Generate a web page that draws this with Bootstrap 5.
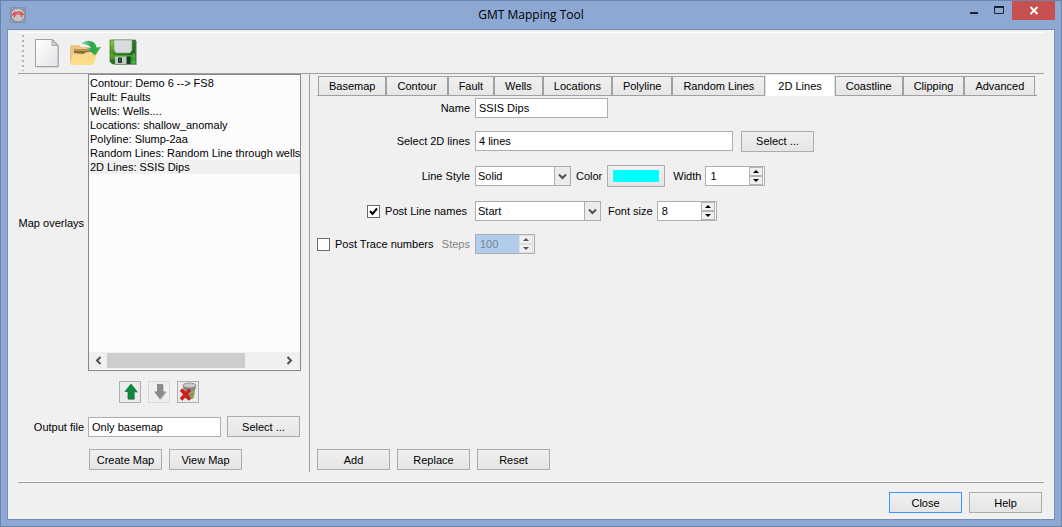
<!DOCTYPE html>
<html lang="en">
<head>
<meta charset="utf-8">
<meta name="viewport" content="width=device-width, initial-scale=1">
<title>GMT Mapping Tool</title>
<link rel="stylesheet" href="https://cdn.jsdelivr.net/npm/bootstrap@5.3.0/dist/css/bootstrap.min.css">
<style>
  :root { --face: #f0f0f0; --line: #a0a0a0; --edge: #abadb3; --chrome: #8ca8d3; }
  body { font-family: "Liberation Sans", Arial, sans-serif; font-size: 11px; line-height: 14px; color: #000; background: var(--chrome); }
  button, input, select { font: inherit; color: inherit; }
  .window { border: 1px solid #6d84a8; padding: 0 6px 6px; }
  .titlebar { height: 28px; }
  .titlebar h1 { font: 12px/28px "Open Sans", sans-serif; }
  .titlebar .app-icon { width: 16px; margin-left: 3px; margin-top: 6px; }
  .win-controls { height: 19px; }
  .win-controls button { border: 0; padding: 0; background: none; width: 25px; height: 19px; display: flex; }
  .win-controls .win-close { background: #c75050; width: 43px; }
  .client { background: var(--face); border: 1px solid #748cb0; padding: 2px 10px 6px; }
  .tool-bar { border-top: 1px solid #fff; border-bottom: 1px solid var(--line); height: 42px; padding: 3px 4px; gap: 6px; }
  .tool-bar button { border: 0; background: none; padding: 0; width: 32px; height: 32px; }
  .tool-bar svg { display: block; }
  .grip { width: 2px; height: 36px; margin-right: 2px; background: repeating-linear-gradient(#b4b4b4 0 2px, transparent 2px 5px); }

  .overlays { width: 292px; padding-right: 8px; border-right: 1px solid var(--line); margin-bottom: 10px; }
  .side-label { width: 66px; flex: none; text-align: right; white-space: nowrap; }
  .overlay-list { border: 1px solid #828790; background: #fcfcfc; padding: 1px 0; min-width: 0; }
  .overlay-list .list-group-item { border: 0; border-radius: 0; background: none; color: #000; margin: 0; padding: 0 0 0 1px; line-height: 14px; white-space: nowrap; }
  .overlay-list .list-group-item.active { background: var(--face); margin: 0; }
  .h-scroll { background: var(--face); height: 17px; }
  .h-scroll button { border: 0; background: none; padding: 0; width: 18px; height: 17px; display: flex; }
  .h-scroll .thumb { width: 138px; height: 15px; background: #cdcdcd; }
  .icon-btn { width: 22px; height: 22px; padding: 0; border: 1px solid #adadad; background: #ebebeb; display: flex; }
  .icon-btn:disabled { border-color: #d9d9d9; background: #efefef; }
  .move-row { margin: 10px 0 13px 101px; }
  .out-row { padding-right: 1px; }
  .out-select { margin-left: 6px; flex: none; }
  .map-row { margin: 12px 0 2px 71px; }

  .btn-classic { --bs-btn-font-size: 11px; --bs-btn-line-height: 14px; --bs-btn-padding-x: 0; --bs-btn-padding-y: 0; --bs-btn-border-radius: 0; --bs-btn-color: #000; --bs-btn-border-color: #acacac; width: 73px; height: 21px; background: linear-gradient(#f0f0f0, #e5e5e5); }
  .btn-classic.is-default { border-color: #3399ff; }
  .btn-set { gap: 7px; }
  .field { border: 1px solid var(--edge); background: #fff; height: 20px; padding: 0 3px; border-radius: 0; min-width: 0; }
  .name-field { width: 133px; }
  .lines-field { width: 258px; }
  .combo select { appearance: none; width: 100%; padding: 0 20px 0 2px; display: block; }
  .combo svg { position: absolute; right: 0; top: 0; pointer-events: none; }
  .style-combo { width: 96px; }
  .post-combo { width: 126px; }
  .swatch-btn { width: 58px; height: 22px; padding: 4px 5px; border: 1px solid #acacac; background: linear-gradient(#f0f0f0, #e5e5e5); }
  .swatch-btn span { display: block; height: 12px; background: #0ff; }
  .spin { width: 60px; padding: 0 1px 0 0; }
  .spin input { width: 43px; height: 18px; border: 0; padding: 0 4px; background: #fff; appearance: textfield; }
  .spin input::-webkit-inner-spin-button { display: none; }
  .spin input:disabled { background: #b0cdec; color: #7b8390; }
  .spin-arrows { width: 14px; margin: 0 0 0 auto; }
  .spin-arrows button { height: 9px; padding: 0; border: 1px solid #b4b4b4; background: #f0f0f0; display: flex; }
  .spin-arrows button:disabled { border-color: #dcdcdc; }
  .spin:has(:disabled) { background: var(--face); }

  .editor { padding: 0 7px 12px; min-width: 0; }
  .nav-classic { padding: 0 1px; border-bottom: 1px solid var(--line); height: 22px; align-items: flex-end; --bs-nav-tabs-border-width: 0; flex-wrap: nowrap; }
  .nav-classic .nav-link { border: 1px solid var(--line); border-bottom: 0; border-radius: 0; padding: 0 10px; height: 19px; line-height: 18px; font-size: 11px; color: #000; margin: 0; background: linear-gradient(#f0f0f0, #e6e6e6); white-space: nowrap; }
  .nav-classic .nav-link.active { background: #fff; color: #000; height: 22px; margin-bottom: -1px; padding: 0 12px; line-height: 20px; position: relative; }
  .form-line { height: 22px; margin-top: 13px; }
  .form-line.tight { margin-top: 11px; }
  .form-line.first { margin-top: 1px; }
  .caption-col { width: 153px; margin-right: 5px; white-space: nowrap; }
  .check-pad { padding-right: 3px; }
  .tick { appearance: none; width: 13px; height: 13px; margin: 0 5px 0 0; border: 1px solid #6a6a6a; background: #fff; }
  .tick:checked { background: #fff url("data:image/svg+xml,%3Csvg xmlns='http://www.w3.org/2000/svg' viewBox='0 0 11 11'%3E%3Cpath d='M2 5l2.5 3L9 2.5' fill='none' stroke='%23000' stroke-width='2'/%3E%3C/svg%3E"); }
  .dim { color: #838383; }
  .color-label { margin: 0 5px; }
  .width-label { margin: 0 4px 0 8px; }
  .size-label { margin: 0 4px 0 7px; }
  .footer-bar { border-top: 1px solid var(--line); box-shadow: 0 -1px #fff; padding: 9px 2px 0; gap: 7px; }
</style>
</head>
<body>
<div class="window d-flex flex-column min-vh-100">
  <header class="titlebar position-relative d-flex justify-content-between align-items-start">
    <svg class="app-icon" width="16" height="16" viewBox="0 0 16 16" aria-hidden="true">
      <rect x=".5" y=".5" width="15" height="15" fill="#8e9eb9" stroke="#7e92b5"/>
      <circle cx="8" cy="8" r="7" fill="#c6c3c3" stroke="#8a8789"/>
      <path d="M2 8.500q1.500-1 2.500-3l6-.5 3.500 3M4 7h9M5.500 7l-1.500 3M11 7l1 3" fill="none" stroke="#e33a40" stroke-width="1.200"/>
    </svg>
    <h1 class="position-absolute start-0 end-0 text-center m-0 pe-none">GMT Mapping Tool</h1>
    <div class="win-controls d-flex">
      <button type="button" aria-label="Minimize"><svg width="25" height="19"><path d="M8 12h8" stroke="#1c2430" stroke-width="2"/></svg></button>
      <button type="button" aria-label="Maximize"><svg width="25" height="19"><path d="M7.500 6v6.500h9V6" fill="none" stroke="#1c2430"/><path d="M7 6h10" stroke="#1c2430" stroke-width="2"/></svg></button>
      <button type="button" class="win-close" aria-label="Close window"><svg width="43" height="19"><path d="M18.500 6l7 7m0-7l-7 7" stroke="#fff" stroke-width="1.800"/></svg></button>
    </div>
  </header>

  <main class="client flex-grow-1 d-flex flex-column">
    <div class="tool-bar d-flex align-items-center" role="toolbar" aria-label="File">
      <span class="grip"></span>
      <button type="button" aria-label="New">
        <svg width="32" height="32" viewBox="0 0 32 32">
          <defs><linearGradient id="paper" x2="1" y2="1"><stop stop-color="#fff"/><stop offset="1" stop-color="#e3e4e8"/></linearGradient></defs>
          <path d="M5 3.500h17l5 6v21H5z" fill="#999" opacity=".55"/>
          <path d="M3.500 2.500h17l5.500 5.500v21.500H3.500z" fill="url(#paper)" stroke="#a2a2a5"/>
          <path d="M20 2.500v6H26z" fill="#c9cacd" stroke="#a2a2a5" stroke-width=".8"/>
        </svg>
      </button>
      <button type="button" aria-label="Open">
        <svg width="32" height="32" viewBox="0 0 32 32">
          <defs><linearGradient id="fold" y2="1" x2=".2"><stop stop-color="#f4d48c"/><stop offset="1" stop-color="#ffdf86"/></linearGradient>
          <linearGradient id="arr" x2="1"><stop stop-color="#9bdcb0"/><stop offset=".5" stop-color="#2ea45b"/><stop offset="1" stop-color="#3cb42e"/></linearGradient></defs>
          <path d="M0 26V10l1-2h8l2 2h13v7l-3 10z" fill="#e8c681"/>
          <path d="M4 12h19v6H4z" fill="#8d6e3c"/><path d="M4 12h19v2H4z" fill="#bb9554"/>
          <path d="M0 28l3-12 10 1 4-2h11l-5 13z" fill="url(#fold)"/>
          <path d="M11 7q4-4 9-3 6 1 6.500 6.500l4.500-.5-6 8.500-8-7 4.500-.5q-3-4-10.500-4z" fill="url(#arr)"/>
        </svg>
      </button>
      <button type="button" aria-label="Save">
        <svg width="32" height="32" viewBox="0 0 32 32">
          <defs><linearGradient id="disk" x2=".9" y2="1"><stop stop-color="#9bd13c"/><stop offset=".45" stop-color="#2e7b22"/><stop offset=".75" stop-color="#176a20"/><stop offset="1" stop-color="#45c045"/></linearGradient></defs>
          <path d="M5 4h24v24H7z" fill="#666" opacity=".5"/>
          <path d="M2 3h25.500v24H4.500L2 24.500z" fill="url(#disk)" stroke="#2d6d25" stroke-width=".7"/>
          <path d="M2.500 22V16l4 2h17l3.500-2v5q-10-2-16 1z" fill="#66b52d" opacity=".65"/>
          <path d="M6 3h18v10l-2 3H8l-2-3z" fill="#d8dadd" stroke="#83a577" stroke-width=".6"/>
          <rect x="7" y="19.500" width="12" height="7.500" fill="#c3c8c5"/><path d="M18.500 19.500h4V27h-4z" fill="#163f20"/>
          <rect x="10" y="20.500" width="4" height="5.500" rx="1" fill="#12351a"/><path d="M11.500 21.500h1v3.500h-1z" fill="#51965c"/>
        </svg>
      </button>
    </div>

    <div class="flex-grow-1 d-flex">
      <section class="overlays d-flex flex-column">
        <div class="flex-grow-1 d-flex">
          <span class="side-label align-self-center me-1" id="overlays-label">Map overlays</span>
          <div class="overlay-list flex-grow-1 d-flex flex-column">
            <div class="list-group flex-grow-1" role="listbox" aria-labelledby="overlays-label">
              <button type="button" role="option" class="list-group-item text-start">Contour: Demo 6 --&gt; FS8</button>
              <button type="button" role="option" class="list-group-item text-start">Fault: Faults</button>
              <button type="button" role="option" class="list-group-item text-start">Wells: Wells....</button>
              <button type="button" role="option" class="list-group-item text-start">Locations: shallow_anomaly</button>
              <button type="button" role="option" class="list-group-item text-start">Polyline: Slump-2aa</button>
              <button type="button" role="option" class="list-group-item text-start">Random Lines: Random Line through wells</button>
              <button type="button" role="option" class="list-group-item text-start active" aria-selected="true">2D Lines: SSIS Dips</button>
            </div>
            <div class="h-scroll d-flex align-items-center">
              <button type="button" aria-label="Scroll left"><svg width="17" height="17"><path d="M11.500 5L8 8.500l3.500 3.500" fill="none" stroke="#505050" stroke-width="2"/></svg></button>
              <span class="thumb me-auto"></span>
              <button type="button" aria-label="Scroll right"><svg width="17" height="17"><path d="M5.500 5L9 8.500 5.500 12" fill="none" stroke="#505050" stroke-width="2"/></svg></button>
            </div>
          </div>
        </div>
        <div class="d-flex btn-set move-row">
          <button type="button" class="icon-btn" aria-label="Move up"><svg width="20" height="20"><path d="M12 4l6 7h-3v7H9l-1-1z" fill="#999" opacity=".6"/><path d="M11 2l6 7.500h-3V17H8V9.500H5z" fill="#0c8a3c" stroke="#0b6e31" stroke-width=".7"/></svg></button>
          <button type="button" class="icon-btn" aria-label="Move down" disabled><svg width="20" height="20"><path d="M8 3h7v7h3l-6 8.500z" fill="#bbb" opacity=".7"/><path d="M8 2h6v7.500h3L11 17.500 5 9.500h3z" fill="#8b8b8b"/></svg></button>
          <button type="button" class="icon-btn" aria-label="Remove"><svg width="20" height="20"><path d="M5 4l1.500 12q5 3 9 0L18 4z" fill="#898c86"/><path d="M6 8q5 3 11 0l-.3 2q-5 3-10.300 0zM7 14q5 2 9 0l-.3 2q-4 2-8.500 0z" fill="#8cbf3a"/><ellipse cx="11.500" cy="3.500" rx="6.500" ry="2.500" fill="#c9cbc8" stroke="#777" stroke-width=".7"/><path d="M3 7.500l9 10m0-10l-9 10" stroke="#cf1b1b" stroke-width="3.400"/></svg></button>
        </div>
        <div class="d-flex align-items-center out-row">
          <label class="side-label me-1" for="outfile">Output file</label>
          <input id="outfile" class="field flex-grow-1" size="10" value="Only basemap">
          <button type="button" class="btn btn-classic out-select">Select ...</button>
        </div>
        <div class="d-flex btn-set map-row">
          <button type="button" class="btn btn-classic">Create Map</button>
          <button type="button" class="btn btn-classic">View Map</button>
        </div>
      </section>

      <section class="editor flex-grow-1 d-flex flex-column">
        <ul class="nav nav-tabs nav-classic" role="tablist">
          <li class="nav-item"><button type="button" role="tab" class="nav-link">Basemap</button></li>
          <li class="nav-item"><button type="button" role="tab" class="nav-link">Contour</button></li>
          <li class="nav-item"><button type="button" role="tab" class="nav-link">Fault</button></li>
          <li class="nav-item"><button type="button" role="tab" class="nav-link">Wells</button></li>
          <li class="nav-item"><button type="button" role="tab" class="nav-link">Locations</button></li>
          <li class="nav-item"><button type="button" role="tab" class="nav-link">Polyline</button></li>
          <li class="nav-item"><button type="button" role="tab" class="nav-link">Random Lines</button></li>
          <li class="nav-item"><button type="button" role="tab" class="nav-link active" aria-selected="true">2D Lines</button></li>
          <li class="nav-item"><button type="button" role="tab" class="nav-link">Coastline</button></li>
          <li class="nav-item"><button type="button" role="tab" class="nav-link">Clipping</button></li>
          <li class="nav-item"><button type="button" role="tab" class="nav-link">Advanced</button></li>
        </ul>

        <form class="flex-grow-1">
          <div class="form-line first d-flex align-items-center">
            <label class="caption-col text-end" for="name">Name</label>
            <input id="name" class="field name-field" value="SSIS Dips">
          </div>
          <div class="form-line tight d-flex align-items-center">
            <label class="caption-col text-end" for="lines">Select 2D lines</label>
            <input id="lines" class="field lines-field me-2" value="4 lines">
            <button type="button" class="btn btn-classic">Select ...</button>
          </div>
          <div class="form-line d-flex align-items-center">
            <label class="caption-col text-end" for="style">Line Style</label>
            <div class="combo style-combo position-relative">
              <select id="style" class="field"><option>Solid</option><option>Dashed</option></select>
              <svg width="17" height="20"><rect x=".5" y=".5" width="16" height="19" fill="#ececec" stroke="#abadb3"/><path d="M5 8.500l3.500 3.500L12 8.500" fill="none" stroke="#505050" stroke-width="2"/></svg>
            </div>
            <label class="color-label" for="color">Color</label>
            <button type="button" id="color" class="swatch-btn"><span></span></button>
            <label class="width-label" for="width">Width</label>
            <div class="field spin d-flex">
              <input id="width" type="number" value="1">
              <div class="spin-arrows d-flex flex-column">
                <button type="button" aria-label="Increase width"><svg width="12" height="7"><path d="M3 5L6 2l3 3z"/></svg></button>
                <button type="button" aria-label="Decrease width"><svg width="12" height="7"><path d="M3 2L6 5l3-3z"/></svg></button>
              </div>
            </div>
          </div>
          <div class="form-line d-flex align-items-center">
            <div class="caption-col check-pad d-flex align-items-center justify-content-end">
              <input type="checkbox" id="postnames" class="tick" checked><label for="postnames">Post Line names</label>
            </div>
            <div class="combo post-combo position-relative">
              <select class="field" aria-label="Line name position"><option>Start</option><option>End</option></select>
              <svg width="17" height="20"><rect x=".5" y=".5" width="16" height="19" fill="#ececec" stroke="#abadb3"/><path d="M5 8.500l3.500 3.500L12 8.500" fill="none" stroke="#505050" stroke-width="2"/></svg>
            </div>
            <label class="size-label" for="fontsize">Font size</label>
            <div class="field spin d-flex">
              <input id="fontsize" type="number" value="8">
              <div class="spin-arrows d-flex flex-column">
                <button type="button" aria-label="Increase font size"><svg width="12" height="7"><path d="M3 5L6 2l3 3z"/></svg></button>
                <button type="button" aria-label="Decrease font size"><svg width="12" height="7"><path d="M3 2L6 5l3-3z"/></svg></button>
              </div>
            </div>
          </div>
          <div class="form-line tight d-flex align-items-center">
            <div class="caption-col d-flex align-items-center">
              <input type="checkbox" id="posttrace" class="tick"><label for="posttrace">Post Trace numbers</label>
              <label class="dim ms-auto" for="steps">Steps</label>
            </div>
            <div class="field spin d-flex">
              <input id="steps" type="number" value="100" disabled>
              <div class="spin-arrows d-flex flex-column">
                <button type="button" disabled aria-label="Increase steps"><svg width="12" height="7"><path d="M3 5L6 2l3 3z" fill="#555"/></svg></button>
                <button type="button" disabled aria-label="Decrease steps"><svg width="12" height="7"><path d="M3 2L6 5l3-3z" fill="#555"/></svg></button>
              </div>
            </div>
          </div>
        </form>

        <div class="d-flex btn-set">
          <button type="button" class="btn btn-classic">Add</button>
          <button type="button" class="btn btn-classic">Replace</button>
          <button type="button" class="btn btn-classic">Reset</button>
        </div>
      </section>
    </div>

    <footer class="footer-bar d-flex justify-content-end">
      <button type="button" class="btn btn-classic is-default">Close</button>
      <button type="button" class="btn btn-classic">Help</button>
    </footer>
  </main>
</div>
<script src="https://cdn.jsdelivr.net/npm/bootstrap@5.3.0/dist/js/bootstrap.bundle.min.js"></script>
</body>
</html>
